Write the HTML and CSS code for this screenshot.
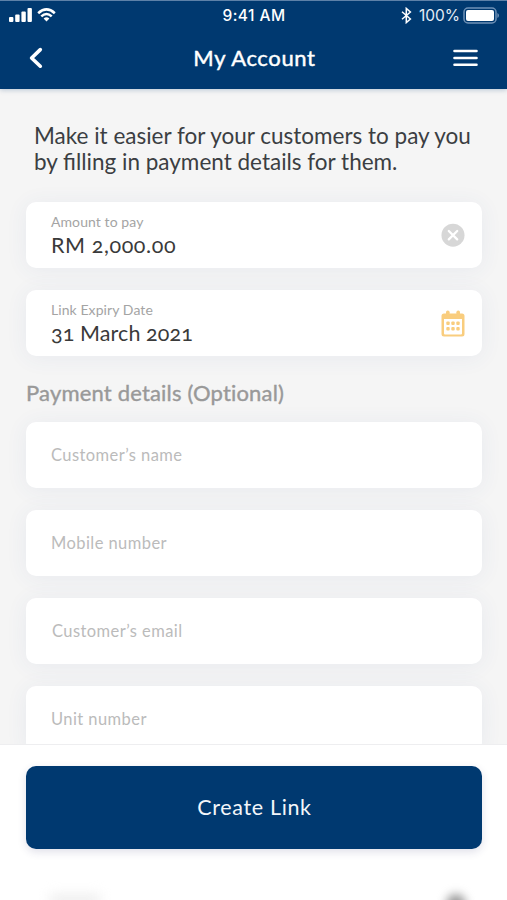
FILE: index.html
```
<!DOCTYPE html>
<html lang="en">
<head>
<meta charset="utf-8">
<title>My Account</title>
<link rel="stylesheet" href="styles.css">
</head>
<body>
<div class="app">
  <header class="header">
    <div class="status">
      <div class="status-left">
        <svg width="24" height="14" viewBox="0 0 24 14" fill="#fff"><rect x="0" y="9" width="4.4" height="5" rx="1"/><rect x="6.2" y="6.5" width="4.4" height="7.5" rx="1"/><rect x="12.4" y="3.5" width="4.4" height="10.5" rx="1"/><rect x="18.5" y="0" width="4.4" height="14" rx="1"/></svg>
        <svg width="19" height="14" viewBox="0 0 19 14" fill="none" stroke="#fff" stroke-width="2.6"><path d="M1.2 5.2Q9.5-2.4 17.8 5.2"/><path d="M4.3 8.4Q9.5 3.6 14.7 8.4"/><path d="M6.6 10.6Q9.5 8 12.4 10.6L9.5 13.6Z" fill="#fff" stroke="none"/></svg>
      </div>
      <div class="time">9:41 AM</div>
      <div class="status-right">
        <svg width="11" height="17" viewBox="0 0 11 17" fill="none" stroke="#fff" stroke-width="1.5"><path d="M1 4.8L9.4 12 5.3 15.6V1.4L9.4 5 1 12.2"/></svg>
        <span class="battery">100%</span>
        <svg width="36" height="17" viewBox="0 0 36 17"><rect x="1" y="1" width="32" height="15" rx="4" fill="none" stroke="#6f91b6" stroke-width="1.5"/><rect x="3" y="3" width="28" height="11" rx="2" fill="#fff"/><path d="M34.4 6v5Q36 10.2 36 8.5T34.4 6Z" fill="#6f91b6"/></svg>
      </div>
    </div>
    <div class="nav">
      <svg width="14" height="22" viewBox="0 0 14 22" fill="none" stroke="#fff" stroke-width="3.6" stroke-linecap="round" stroke-linejoin="round"><path d="M11.3 2.6L2.6 11l8.7 8.2"/></svg>
      <h1>My Account</h1>
      <svg width="25" height="18" viewBox="0 0 25 18" stroke="#fff" stroke-width="2.6" stroke-linecap="round"><path d="M1.5 2h22M1.5 9h22M1.5 15.8h22"/></svg>
    </div>
  </header>
  <main class="content">
    <p class="intro">Make it easier for your customers to pay you<br>by filling in payment details for them.</p>
    <div class="card">
      <div class="field"><span class="label">Amount to pay</span><span class="value amount">RM 2,000.00</span></div>
      <svg width="24" height="24" viewBox="0 0 24 24"><circle cx="12" cy="12.2" r="11.5" fill="#d7d7d7"/><path d="M7.8 8l8.4 8.4M16.2 8l-8.4 8.4" stroke="#fff" stroke-width="2.3" stroke-linecap="round"/></svg>
    </div>
    <div class="card">
      <div class="field"><span class="label">Link Expiry Date</span><span class="value date">31 March 2021</span></div>
      <svg width="24" height="27" viewBox="0 0 24 27" fill="#f9cd7e"><path fill-rule="evenodd" d="M3 3.5H21Q23.5 3.5 23.5 6V24Q23.5 26.5 21 26.5H3Q.5 26.5 .5 24V6Q.5 3.5 3 3.5ZM3 9V23.5Q3 24.5 4 24.5H20Q21 24.5 21 23.5V9Z"/><rect x="5" y="0.5" width="3.6" height="5" rx="1.7"/><rect x="15.4" y="0.5" width="3.6" height="5" rx="1.7"/><rect x="5.3" y="11.5" width="3.4" height="3.4" rx="1"/><rect x="10.3" y="11.5" width="3.4" height="3.4" rx="1"/><rect x="15.3" y="11.5" width="3.4" height="3.4" rx="1"/><rect x="5.3" y="17" width="3.4" height="3.4" rx="1"/><rect x="10.3" y="17" width="3.4" height="3.4" rx="1"/><rect x="15.3" y="17" width="3.4" height="3.4" rx="1"/></svg>
    </div>
    <h2>Payment details (Optional)</h2>
    <div class="card"><span class="placeholder">Customer’s name</span></div>
    <div class="card"><span class="placeholder">Mobile number</span></div>
    <div class="card inset"><span class="placeholder">Customer’s email</span></div>
    <div class="card"><span class="placeholder">Unit number</span></div>
  </main>
  <footer class="footer">
    <button class="create">Create Link</button>
    <div class="blurs"><i class="blur-left"></i><i class="blur-right"></i></div>
  </footer>
</div>
</body>
</html>
```
FILE: styles.css
```
* { box-sizing: border-box; }
body { margin: 0; font-family: Lato, "Liberation Sans", sans-serif; }
svg { display: block; flex: none; }
.app { width: 507px; height: 900px; overflow: hidden; display: flex; flex-direction: column; background: #f5f5f5; }
.header { height: 88.5px; flex: none; background: #003970; border-top: 1.5px solid #5d81a8; color: #fff; box-shadow: 0 1px 5px rgba(0, 57, 112, .25); }
.status { height: 28px; padding: 0 8px 0 9px; display: grid; grid-template-columns: 1fr auto 1fr; align-items: center; font-family: Inter, sans-serif; }
.status-left { display: flex; gap: 4px; }
.status-right { display: flex; gap: 7px; justify-content: flex-end; align-items: center; }
.status-right svg:last-child { margin-left: -4px; }
.time { font-size: 15.5px; font-weight: 500; letter-spacing: .45px; }
.battery { font-size: 15.5px; color: #e6edf5; }
.nav { height: 58px; padding: 0 29px; display: grid; grid-template-columns: 25px 1fr 25px; align-items: center; }
h1 { margin: 0; font-size: 22px; font-weight: 400; -webkit-text-stroke: .45px; letter-spacing: .65px; line-height: 28px; text-align: center; padding-left: 2px; }
.content { height: 655.5px; flex: none; overflow: hidden; padding: 34px 25px 0 26px; }
.intro { margin: 0 0 27.8px 8px; font-size: 22.5px; line-height: 26px; color: #3b3e42; white-space: nowrap; }
.card { height: 66px; margin-bottom: 21.8px; padding: 0 17px 0 25px; background: #fff; border-radius: 10px; box-shadow: 0 2px 22px rgba(60, 80, 160, .07); display: flex; justify-content: space-between; align-items: center; }
.inset { padding-left: 26px; }
.field { display: flex; flex-direction: column; align-items: flex-start; }
.label { font-size: 14px; line-height: 20px; color: #a4a4a4; letter-spacing: .08px; padding-top: 1px; }
.value { font-size: 21.5px; line-height: 27.6px; color: #3a3a3a; font-variant-numeric: oldstyle-nums; }
.amount { letter-spacing: .6px; }
.date { letter-spacing: .1px; }
h2 { margin: 0 0 15.4px; font-size: 22px; line-height: 29px; font-weight: 400; -webkit-text-stroke: .4px; letter-spacing: .18px; color: #999; }
.placeholder { font-size: 16.5px; line-height: 24px; color: #bbb; letter-spacing: .43px; }
.footer { flex: 1; background: #fff; border-top: 1px solid #eeeef0; padding: 21px 25px 0 26px; }
.create { display: block; width: 100%; height: 83px; border: 0; border-radius: 10px; background: #003970; color: #f3f6fa; font-family: inherit; font-size: 21.5px; letter-spacing: .65px; padding: 0 0 2px 1px; box-shadow: 0 3px 8px rgba(50, 50, 110, .15); }
.blurs { display: flex; justify-content: space-between; padding: 45px 16px 0 24px; }
.blur-left { width: 50px; height: 12px; background: #eee; filter: blur(6px); }
.blur-right { width: 20px; height: 20px; border-radius: 12px; background: #999; filter: blur(5px); }
```
